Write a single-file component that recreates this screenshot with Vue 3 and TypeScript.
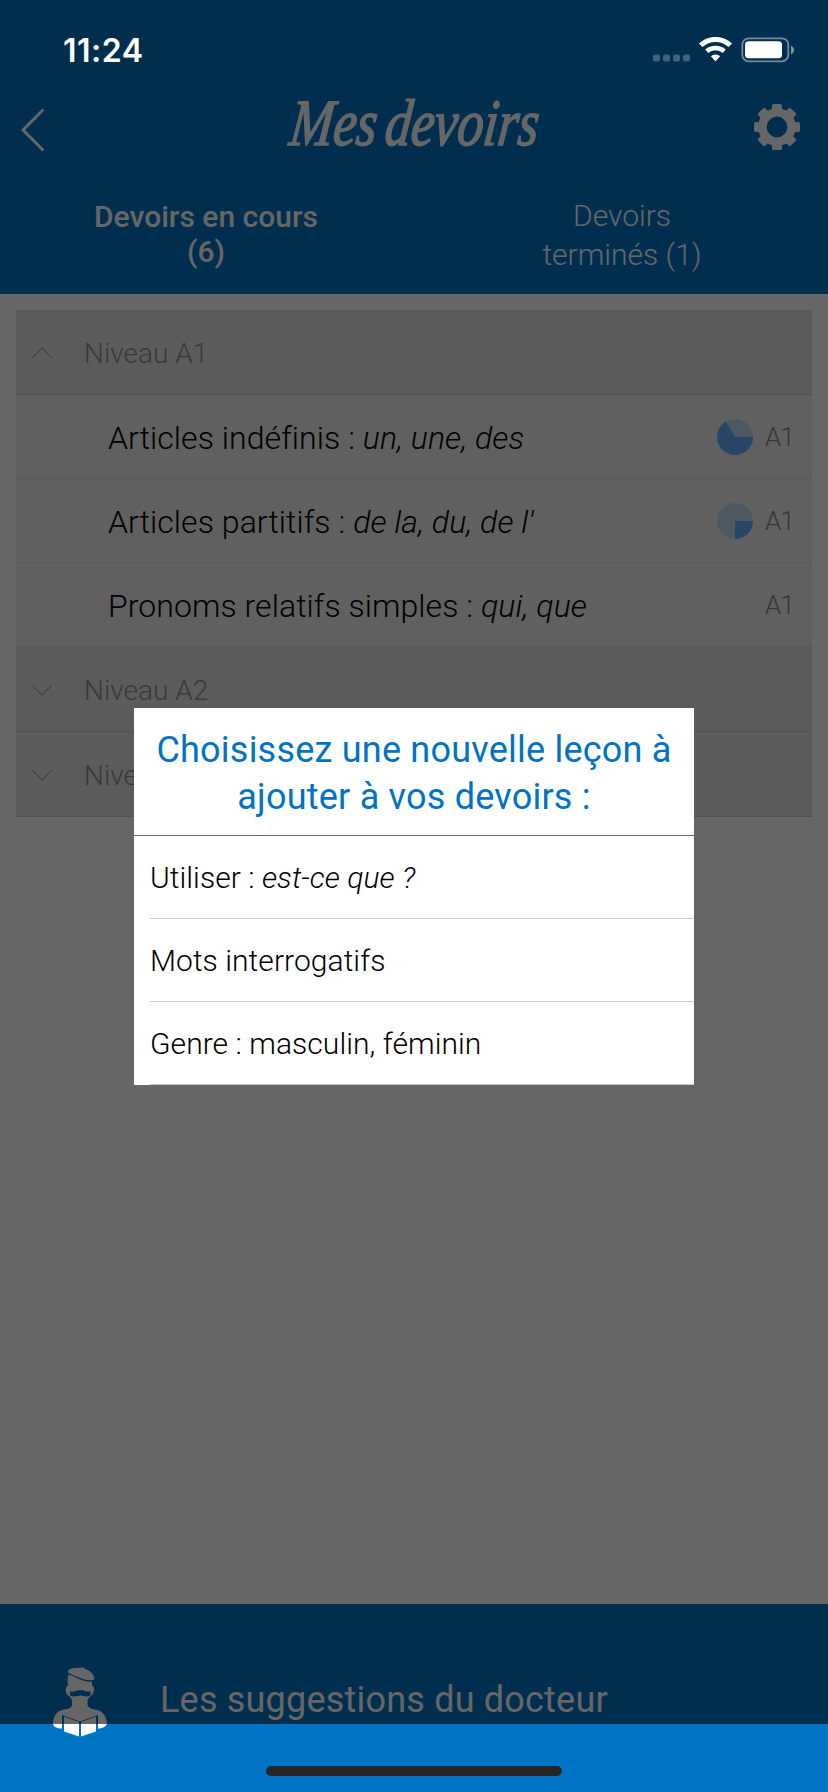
<script setup lang="ts">
interface Lesson {
  title: string
  example?: string
  level?: string
  progress?: number
}
interface Group {
  name: string
  open: boolean
  lessons: Lesson[]
}

const groups: Group[] = [
  {
    name: 'Niveau A1',
    open: true,
    lessons: [
      { title: 'Articles indéfinis : ', example: 'un, une, des', level: 'A1', progress: 240 },
      { title: 'Articles partitifs : ', example: "de la, du, de l'", level: 'A1', progress: 90 },
      { title: 'Pronoms relatifs simples : ', example: 'qui, que', level: 'A1' },
    ],
  },
  { name: 'Niveau A2', open: false, lessons: [] },
  { name: 'Niveau B1', open: false, lessons: [] },
]

const choices: Lesson[] = [
  { title: 'Utiliser : ', example: 'est-ce que ?' },
  { title: 'Mots interrogatifs' },
  { title: 'Genre : masculin, féminin' },
]

const toothAngles = [0, 45, 90, 135, 180, 225, 270, 315]

function sector(degrees: number): string {
  const a = (degrees * Math.PI) / 180
  const large = degrees > 180 ? 1 : 0
  return `M18 18H36A18 18 0 ${large} 1 ${18 + 18 * Math.cos(a)} ${18 + 18 * Math.sin(a)}Z`
}
</script>

<template>
  <div class="screen">
    <header class="header">
      <div class="navbar">
        <svg class="back" width="26" height="44" viewBox="0 0 26 44">
          <path d="M24.4 1.5 4 22 24.4 42.5" fill="none" stroke="#fff" stroke-width="3" />
        </svg>
        <h1 class="brand">Mes devoirs</h1>
        <svg class="gear" width="46" height="46" viewBox="0 0 46 46">
          <circle cx="23" cy="23" r="14.6" fill="none" stroke="#fff" stroke-width="8.4" />
          <rect
            v-for="a in toothAngles"
            :key="a"
            x="18"
            y="0"
            width="10"
            height="8"
            rx="1.8"
            fill="#fff"
            :transform="`rotate(${a} 23 23)`"
          />
        </svg>
      </div>
      <nav class="tabs">
        <div class="tab active"><span>Devoirs en cours<br />(6)</span></div>
        <div class="tab"><span>Devoirs<br />terminés (1)</span></div>
      </nav>
    </header>

    <main class="content">
      <section v-for="g in groups" :key="g.name">
        <div class="group">
          <svg class="chevron" width="22" height="12" viewBox="0 0 22 12">
            <path
              :d="g.open ? 'M1 11 11 1 21 11' : 'M1 1 11 11 21 1'"
              fill="none"
              stroke="#8c8c8c"
              stroke-width="1"
            />
          </svg>
          <span>{{ g.name }}</span>
        </div>
        <div v-for="l in g.lessons" :key="l.title" class="lesson">
          <span class="lesson-title">{{ l.title }}<em>{{ l.example }}</em></span>
          <svg v-if="l.progress" class="pie" width="36" height="36" viewBox="0 0 36 36">
            <circle cx="18" cy="18" r="18" fill="#c4dcf7" />
            <path :d="sector(l.progress)" fill="#64b2ff" />
          </svg>
          <span class="level">{{ l.level }}</span>
        </div>
      </section>
    </main>

    <footer class="footer">
      <svg class="doctor" width="56" height="70" viewBox="0 0 56 70">
        <g fill="#fff">
          <path d="M16 3.5C18 1 25 .5 29 .8L31 .2 32 1.4C38 3 43 8 42.4 12.5 38 14.5 31 12.5 26 10 22 8 15 7 16 3.5Z" />
          <path d="M16.5 7.5C20 8.5 24 10.5 27 12 31 14 36 15 40 14.5V18.5C43 19 42.5 26 40 28 38.5 28.5 37 30.5 35.5 33V37.5C36 40.5 39 42 43 42.5 50 43 54.5 49 55 56 54.5 60 50 61.5 46 61.5V48L28 54.5 10 48V61.5C5 61.5 1 60 1 56 1.5 48 6 43 12 42.5 17 42 20 40.5 20 37.5V33C19 30.5 17 28.5 15.5 28 13 25 13 19.5 16 18.5 15.5 15 15.5 11 16.5 7.5Z" />
          <path d="M12 49.5 27 55V69.5L12 64.5ZM44 49.5 29 55V69.5L44 64.5Z" />
        </g>
        <path d="M18 24.5H22.5C24.5 22.8 32 22.8 34 24.5H38.5V28.5C35 30 30.5 29.5 28.5 28.3 26 29.5 21 30 18 28.5Z" fill="#0073c4" />
      </svg>
      <span class="footer-text">Les suggestions du docteur</span>
    </footer>

    <div class="scrim"></div>

    <div class="status">
      <span class="time">11:24</span>
      <svg class="signal" width="142" height="26" viewBox="0 0 142 26">
        <g fill="#fff" opacity=".25">
          <rect x="0" y="17.5" width="7" height="7" rx="2" />
          <rect x="10" y="17.5" width="7" height="7" rx="2" />
          <rect x="20" y="17.5" width="7" height="7" rx="2" />
          <rect x="30" y="17.5" width="7" height="7" rx="2" />
        </g>
        <path d="M47.7 7.3A21.5 21.5 0 0 1 77.3 7.3" fill="none" stroke="#fff" stroke-width="5" transform="translate(0 1)" />
        <path d="M53.7 14.3A13.6 13.6 0 0 1 71.3 14.3" fill="none" stroke="#fff" stroke-width="4.6" />
        <path d="M57.8 19.3A7 7 0 0 1 67.2 19.3L62.5 24.2Z" fill="#fff" />
        <rect x="89.3" y="1.3" width="46" height="23" rx="6.5" fill="none" stroke="#fff" stroke-width="1.8" opacity=".45" />
        <rect x="92" y="4.3" width="37" height="17" rx="3.6" fill="#fff" />
        <path d="M138 8.8C142 10.3 142 15.7 138 17.2Z" fill="#fff" opacity=".5" />
      </svg>
    </div>

    <div class="dialog" role="dialog">
      <h2 class="dialog-title">Choisissez une nouvelle leçon à<br />ajouter à vos devoirs :</h2>
      <ul class="choices">
        <li v-for="c in choices" :key="c.title" class="choice">{{ c.title }}<em>{{ c.example }}</em></li>
      </ul>
    </div>

    <div class="home"></div>
  </div>
</template>

<style>
body {
  margin: 0;
}
</style>

<style scoped>
.screen {
  position: relative;
  display: flex;
  flex-direction: column;
  width: 828px;
  height: 1792px;
  overflow: hidden;
  background: #fff;
  font-family: Roboto, 'Liberation Sans', sans-serif;
  font-weight: 300;
  white-space: pre;
}
.header {
  height: 294px;
  background: #0073c4;
  color: #fff;
}
.navbar {
  display: flex;
  align-items: center;
  justify-content: space-between;
  height: 78px;
  padding: 88px 28px 0 19px;
}
.back {
  margin-top: 6px;
}
.brand {
  display: flex;
  justify-content: center;
  width: 252px;
  margin: 0 0 9px 31px;
  font: italic 400 66px/72px 'Liberation Serif', serif;
  word-spacing: -6px;
  transform: scaleX(0.79) skewX(-8deg);
  -webkit-text-stroke: 1.6px #fff;
}
.tabs {
  display: flex;
  padding-top: 30px;
  font-size: 30px;
}
.tab {
  flex: 1;
  text-align: center;
  line-height: 39px;
}
.tab.active {
  font-weight: 500;
  line-height: 35px;
  padding: 3px 4px 0 0;
}
.content {
  flex: 1;
  padding: 16px;
}
.group {
  box-sizing: border-box;
  display: flex;
  align-items: center;
  height: 85px;
  padding: 2px 0 0 15px;
  gap: 31px;
  background: #e4e4e4;
  border-bottom: 1px solid #c8c8c8;
  color: #919191;
  font-size: 28px;
}
.lesson {
  box-sizing: border-box;
  display: flex;
  align-items: center;
  height: 84px;
  padding: 1px 20px 0 92px;
  background: #f0f0f0;
  border-bottom: 1px solid #dcdcdc;
}
.lesson-title {
  flex: 1;
  padding-top: 1px;
  color: #000;
  font-size: 32px;
  letter-spacing: 0.06px;
}
.level {
  width: 27px;
  margin-left: 12px;
  color: #888;
  font-size: 26px;
  letter-spacing: -0.8px;
}
.footer {
  box-sizing: border-box;
  display: flex;
  height: 188px;
  padding: 63px 0 0 52px;
  background: #0073c4;
  color: #fff;
}
.footer-text {
  margin-left: 52px;
  font-size: 36px;
  font-weight: 400;
  line-height: 66px;
  letter-spacing: 0.2px;
}
.scrim {
  position: absolute;
  inset: 0 0 68px;
  background: rgba(0, 0, 0, 0.6);
}
.status {
  position: absolute;
  inset: 0 0 auto;
  display: flex;
  justify-content: space-between;
  padding: 30px 33px 0 63px;
  color: #fff;
}
.time {
  font: 600 32px/41px Inter, sans-serif;
  letter-spacing: 0.5px;
}
.signal {
  margin-top: 6.5px;
}
.dialog {
  position: absolute;
  top: 708px;
  left: 134px;
  width: 560px;
  height: 377px;
  background: #fff;
}
.dialog-title {
  box-sizing: border-box;
  height: 128px;
  margin: 0;
  padding-top: 19px;
  border-bottom: 1px solid #666;
  color: #0073c4;
  font-size: 36px;
  font-weight: 400;
  line-height: 47px;
  letter-spacing: 0.22px;
  text-align: center;
}
.choices {
  margin: 0;
  padding: 0 0 0 16px;
  list-style: none;
}
.choice {
  box-sizing: border-box;
  height: 83px;
  border-bottom: 1px solid #c8c7cc;
  color: #000;
  font-size: 30px;
  line-height: 83px;
  letter-spacing: 0.06px;
}
.home {
  position: absolute;
  bottom: 16px;
  left: 266px;
  width: 296px;
  height: 10px;
  border-radius: 5px;
  background: #262626;
}
</style>
